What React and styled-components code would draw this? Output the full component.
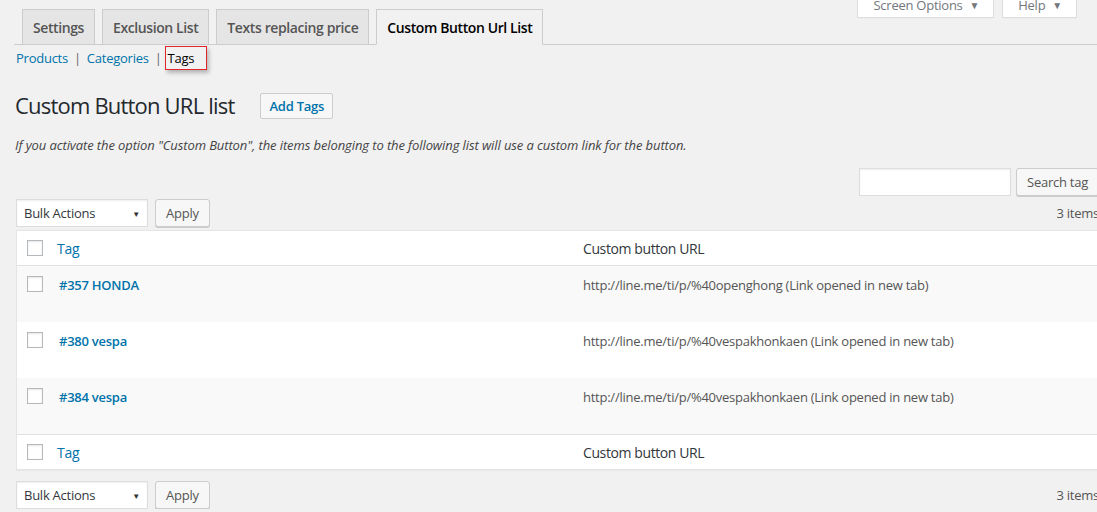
import React from 'react';
import styled, { createGlobalStyle } from 'styled-components';

const GlobalStyle = createGlobalStyle`
    body {
        margin: 0;
        background: #f1f1f1;
        font-family: "Open Sans", "Noto Sans", sans-serif;
        font-size: 13px;
        letter-spacing: -0.25px;
        color: #444;
        overflow: hidden;
    }
`;

const TopBar = styled.div`
    display: flex;
    justify-content: space-between;
    margin-left: 14px;
    padding-right: 20px;
    border-bottom: 1px solid #ccc;
    height: 44px;
`;

const Tabs = styled.div`
    display: flex;
    align-items: flex-end;
    gap: 7px;
    padding-left: 8px;
`;

const Tab = styled.div`
    box-sizing: border-box;
    padding: 0 10px;
    display: flex;
    align-items: center;
    border: 1px solid #ccc;
    border-bottom: ${p => (p.$active ? '1px solid #f1f1f1' : 'none')};
    margin-bottom: ${p => (p.$active ? '-1px' : '0')};
    height: ${p => (p.$active ? '36px' : '35px')};
    background: ${p => (p.$active ? '#f1f1f1' : '#e5e5e5')};
    color: ${p => (p.$active ? '#000' : '#555')};
    font-size: 14px;
    font-weight: 600;
    letter-spacing: -0.4px;
    white-space: nowrap;
`;

const MetaLinks = styled.div`
    display: flex;
    gap: 8px;
    margin-top: -9px;
`;

const MetaButton = styled.div`
    height: 27px;
    box-sizing: border-box;
    display: flex;
    align-items: center;
    gap: 7px;
    padding: 0 14px 0 15px;
    background: #fff;
    border: 1px solid #ddd;
    box-shadow: 0 1px 1px -1px rgba(0, 0, 0, 0.1);
    color: #72777c;
    font-size: 13px;
`;

const Caret = styled.span`
    font-size: 10px;
    color: #72777c;
`;

const Wrap = styled.div`
    margin-left: 16px;
    width: 1083px;
`;

const SubNav = styled.div`
    display: flex;
    align-items: center;
    height: 26px;
    font-size: 13px;
`;

const SubLink = styled.a`
    color: #0073aa;
    text-decoration: none;
`;

const Sep = styled.span`
    color: #666;
    margin: 0 6px;
`;

const Current = styled.span`
    color: #000;
    padding: 2px 12px 2px 2px;
    margin-left: -3px;
    border: 1px solid #e0262b;
    box-shadow: 2px 3px 4px rgba(0, 0, 0, 0.25);
`;

const HeadingRow = styled.div`
    display: flex;
    align-items: center;
    gap: 26px;
    margin-top: 20px;
    margin-left: -1px;
`;

const Title = styled.h1`
    margin: 0;
    font-size: 22px;
    font-weight: 400;
    line-height: 29px;
    letter-spacing: -0.8px;
    color: #23282d;
`;

const TitleAction = styled.a`
    display: inline-block;
    padding: 3px 8px;
    border: 1px solid #ccc;
    border-radius: 2px;
    background: #f7f7f7;
    color: #0073aa;
    font-size: 13px;
    font-weight: 600;
    line-height: 18px;
    text-decoration: none;
`;

const Description = styled.p`
    margin: 16px 0 0 -1px;
    font-style: italic;
    font-size: 13px;
    letter-spacing: -0.1px;
    color: #444;
    line-height: 18px;
`;

const SearchBox = styled.div`
    display: flex;
    justify-content: flex-end;
    gap: 5px;
    margin-top: 14px;
`;

const SearchInput = styled.input`
    width: 152px;
    height: 28px;
    box-sizing: border-box;
    border: 1px solid #ddd;
    background: #fff;
    box-shadow: inset 0 1px 2px rgba(0, 0, 0, 0.07);
    margin: 0;
`;

const Button = styled.button`
    height: 28px;
    box-sizing: border-box;
    padding: 0 10px;
    border: 1px solid #ccc;
    border-radius: 3px;
    background: #f7f7f7;
    box-shadow: 0 1px 0 #ccc;
    color: #555;
    font-family: inherit;
    font-size: 13px;
    letter-spacing: -0.25px;
    white-space: nowrap;
`;

const TableNav = styled.div`
    display: flex;
    align-items: center;
    gap: 7px;
    margin-top: ${p => p.$top}px;
    height: 28px;
`;

const Select = styled.div`
    position: relative;
    width: 132px;
    height: 28px;
    box-sizing: border-box;
    padding-left: 7px;
    display: flex;
    align-items: center;
    border: 1px solid #ddd;
    background: #fff;
    box-shadow: inset 0 1px 2px rgba(0, 0, 0, 0.07);
    color: #32373c;
    font-size: 13px;

    &::after {
        content: '▼';
        position: absolute;
        right: 7px;
        top: 8px;
        font-size: 8px;
        color: #333;
    }
`;

const Count = styled.span`
    margin-left: auto;
    color: #555;
    font-size: 13px;
`;

const Table = styled.div`
    margin-top: 3px;
    background: #fff;
    border: 1px solid #e5e5e5;
    box-shadow: 0 1px 1px rgba(0, 0, 0, 0.04);
`;

const Row = styled.div`
    display: grid;
    grid-template-columns: 32px 524px 1fr;
    align-items: ${p => (p.$head ? 'center' : 'start')};
    height: ${p => (p.$head ? 34 : 56)}px;
    background: ${p => (p.$alt ? '#f9f9f9' : '#fff')};
    border-bottom: ${p => (p.$border === 'bottom' ? '1px solid #e1e1e1' : 'none')};
    border-top: ${p => (p.$border === 'top' ? '1px solid #e1e1e1' : 'none')};
`;

const CheckCell = styled.div`
    padding: ${p => (p.$head ? '0' : '10px')} 0 0 10px;
`;

const Check = styled.span`
    display: block;
    width: 16px;
    height: 16px;
    box-sizing: border-box;
    border: 1px solid #b4b9be;
    background: #fff;
    box-shadow: inset 0 1px 2px rgba(0, 0, 0, 0.1);
`;

const HeadLink = styled.a`
    padding-left: 8px;
    color: #0073aa;
    font-size: 14px;
    text-decoration: none;
`;

const HeadText = styled.span`
    padding-left: 10px;
    color: #32373c;
    font-size: 14px;
    letter-spacing: -0.4px;
`;

const RowTitle = styled.a`
    display: block;
    padding: 10px 0 0 10px;
    color: #0073aa;
    font-weight: 600;
    font-size: 13px;
    text-decoration: none;
`;

const RowUrl = styled.span`
    display: block;
    padding: 10px 0 0 10px;
    color: #555;
    font-size: 13px;
`;

const tags = [
    { name: '#357 HONDA', url: 'http://line.me/ti/p/%40openghong' },
    { name: '#380 vespa', url: 'http://line.me/ti/p/%40vespakhonkaen' },
    { name: '#384 vespa', url: 'http://line.me/ti/p/%40vespakhonkaen' },
];

function App() {
    return (
        <>
            <GlobalStyle />
            <TopBar>
                <Tabs>
                    <Tab>Settings</Tab>
                    <Tab>Exclusion List</Tab>
                    <Tab>Texts replacing price</Tab>
                    <Tab $active>Custom Button Url List</Tab>
                </Tabs>
                <MetaLinks>
                    <MetaButton>Screen Options <Caret>▼</Caret></MetaButton>
                    <MetaButton>Help <Caret>▼</Caret></MetaButton>
                </MetaLinks>
            </TopBar>

            <Wrap>
                <SubNav>
                    <SubLink>Products</SubLink>
                    <Sep>|</Sep>
                    <SubLink>Categories</SubLink>
                    <Sep>|</Sep>
                    <Current>Tags</Current>
                </SubNav>

                <HeadingRow>
                    <Title>Custom Button URL list</Title>
                    <TitleAction>Add Tags</TitleAction>
                </HeadingRow>

                <Description>
                    If you activate the option "Custom Button", the items belonging to the following list will use a custom link for the button.
                </Description>

                <SearchBox>
                    <SearchInput type="search" />
                    <Button>Search tag</Button>
                </SearchBox>

                <TableNav $top={3}>
                    <Select>Bulk Actions</Select>
                    <Button>Apply</Button>
                    <Count>3 items</Count>
                </TableNav>

                {/* tag list */}
                <Table>
                    <Row $head $border="bottom">
                        <CheckCell $head><Check /></CheckCell>
                        <HeadLink>Tag</HeadLink>
                        <HeadText>Custom button URL</HeadText>
                    </Row>
                    {tags.map((tag, idx) => (
                        <Row key={idx} $alt={idx % 2 === 0}>
                            <CheckCell><Check /></CheckCell>
                            <RowTitle>{tag.name}</RowTitle>
                            <RowUrl>{tag.url} (Link opened in new tab)</RowUrl>
                        </Row>
                    ))}
                    <Row $head $border="top">
                        <CheckCell $head><Check /></CheckCell>
                        <HeadLink>Tag</HeadLink>
                        <HeadText>Custom button URL</HeadText>
                    </Row>
                </Table>

                <TableNav $top={11}>
                    <Select>Bulk Actions</Select>
                    <Button>Apply</Button>
                    <Count>3 items</Count>
                </TableNav>
            </Wrap>
        </>
    );
}

export default App;
